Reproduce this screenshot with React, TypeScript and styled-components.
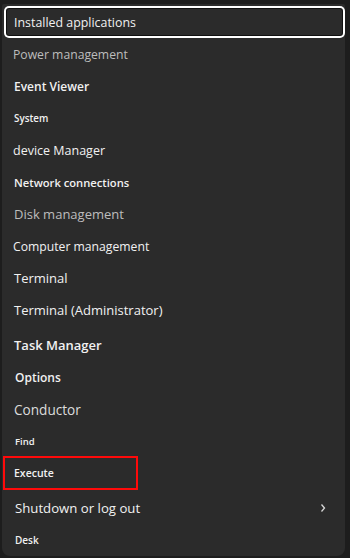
import React from "react";
import styled, { createGlobalStyle } from "styled-components";

const Global = createGlobalStyle`
  html, body { margin: 0; padding: 0; background: #1d1d1d; }
  body { font-family: "Open Sans", "Noto Sans", sans-serif; -webkit-font-smoothing: antialiased; }
`;

const Stage = styled.div`
  width: 350px;
  height: 558px;
  box-sizing: border-box;
  padding: 4px 5px 2px 2px;
  background: #1d1d1d;
`;

const Panel = styled.div`
  height: 552px;
  background: #2b2b2b;
  border-radius: 2px 2px 8px 8px;
  display: flex;
  flex-direction: column;
  padding-top: 2px;
  box-sizing: border-box;
`;

const Group = styled.div`
  display: flex;
  flex-direction: column;
`;

const Divider = styled.div`
  height: 1px;
  background: #3d3d3d;
  margin: 1px 0 2px;
`;

type Tone = "bright" | "dim" | "mid";

const Row = styled.div<{ $focus?: boolean }>`
  position: relative;
  height: 32px;
  display: flex;
  align-items: center;
  justify-content: space-between;
  padding: 0 18px 0 12px;
  box-sizing: border-box;
  ${(p) =>
    p.$focus &&
    `
    margin: 0 0 0 2px;
    padding-left: 10px;
    border-radius: 5px;
    box-shadow: inset 0 0 0 2px #ffffff, inset 0 0 0 3px #111111;
  `}
`;

const Label = styled.span<{ $size: number; $tone: Tone; $weight?: number; $dx?: number }>`
  font-size: ${(p) => p.$size}px;
  font-weight: ${(p) => p.$weight ?? 500};
  margin-left: ${(p) => p.$dx ?? 0}px;
  color: ${(p) =>
    p.$tone === "bright" ? "#f1f1f1" : p.$tone === "mid" ? "#dcdcdc" : "#bdbdbd"};
  white-space: nowrap;
  letter-spacing: 0;
`;

const Chevron = styled.svg`
  width: 8px;
  height: 10px;
  flex: none;
`;

const Mark = styled.div`
  position: absolute;
  left: 1px;
  top: -1px;
  width: 135px;
  height: 34px;
  border: 2px solid #ff0a0a;
  box-sizing: border-box;
`;

type Item = {
  label: string;
  size: number;
  tone: Tone;
  weight?: number;
  dx?: number;
  focus?: boolean;
  mark?: boolean;
  arrow?: boolean;
};

const groups: Item[][] = [
  [
    { label: "Installed applications", size: 12.4, tone: "bright", focus: true },
    { label: "Power management", size: 12.2, tone: "dim", dx: -1 },
    { label: "Event Viewer", size: 12, tone: "bright", weight: 600 },
    { label: "System", size: 9.8, tone: "bright", weight: 600 },
    { label: "device Manager", size: 12.5, tone: "bright", dx: -1 },
    { label: "Network connections", size: 11.2, tone: "bright", weight: 600 },
    { label: "Disk management", size: 13, tone: "dim" },
    { label: "Computer management", size: 12.2, tone: "bright", dx: -1 },
    { label: "Terminal", size: 13, tone: "bright" },
    { label: "Terminal (Administrator)", size: 13, tone: "bright" },
  ],
  [
    { label: "Task Manager", size: 13, tone: "bright", weight: 600 },
    { label: "Options", size: 12, tone: "bright", weight: 600, dx: 1 },
    { label: "Conductor", size: 13.6, tone: "mid" },
    { label: "Find", size: 9.5, tone: "bright", weight: 600, dx: 1 },
    { label: "Execute", size: 10.5, tone: "bright", weight: 600, mark: true },
  ],
  [
    { label: "Shutdown or log out", size: 13.2, tone: "bright", dx: 1, arrow: true },
    { label: "Desk", size: 10, tone: "bright", weight: 600, dx: 1 },
  ],
];

export default function App() {
  return (
    <>
      <Global />
      <Stage>
        <Panel>
          {groups.map((g, gi) => (
            <React.Fragment key={gi}>
              {gi > 0 && <Divider />}
              <Group>
                {g.map((it) => (
                  <Row key={it.label} $focus={it.focus}>
                    <Label $size={it.size} $tone={it.tone} $weight={it.weight} $dx={it.dx}>
                      {it.label}
                    </Label>
                    {it.arrow && (
                      <Chevron viewBox="0 0 8 10">
                        <path d="M2.5 1.5 L5.5 5 L2.5 8.5" fill="none" stroke="#d8d8d8" strokeWidth="1.3" />
                      </Chevron>
                    )}
                    {it.mark && <Mark />}
                  </Row>
                ))}
              </Group>
            </React.Fragment>
          ))}
        </Panel>
      </Stage>
    </>
  );
}
